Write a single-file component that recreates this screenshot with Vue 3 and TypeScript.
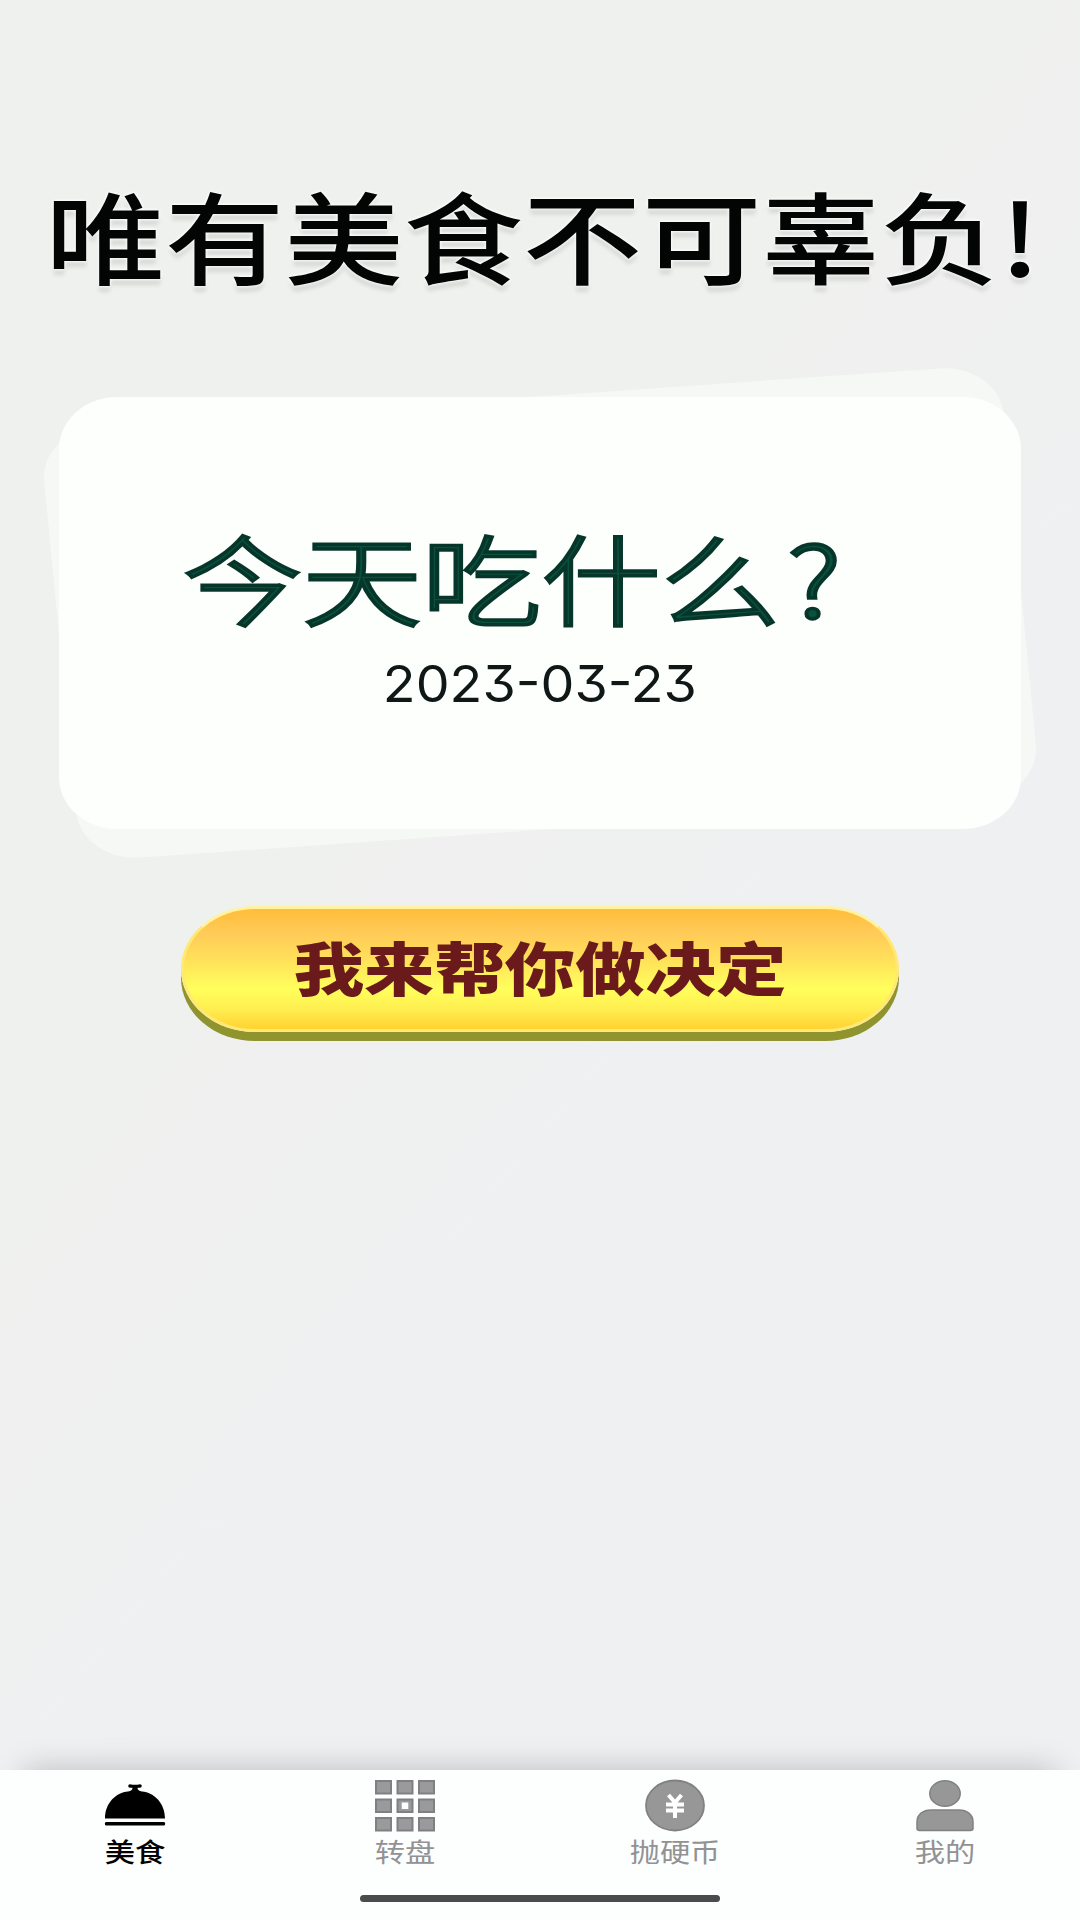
<script setup lang="ts">
type TabIcon = 'food' | 'wheel' | 'coin' | 'mine'

interface Tab {
  icon: TabIcon
  label: string
}

const title = '唯有美食不可辜负!'
const question = '今天吃什么'
const date = '2023-03-23'
const active: TabIcon = 'food'

const tabs: Tab[] = [
  { icon: 'food', label: '美食' },
  { icon: 'wheel', label: '转盘' },
  { icon: 'coin', label: '抛硬币' },
  { icon: 'mine', label: '我的' },
]

const cells = [0, 1, 2, 3, 4, 5, 6, 7, 8]
</script>

<template>
  <div class="screen">
    <h1 class="title"><span class="wide">{{ title }}</span></h1>

    <section class="card">
      <div class="question"><span class="wide">{{ question }}<span class="mark">?</span></span></div>
      <div class="date"><span class="wide">{{ date }}</span></div>
    </section>

    <button class="decide"><span class="wide">我来帮你做决定</span></button>

    <nav class="tabbar">
      <div class="tabs">
        <div v-for="tab in tabs" :key="tab.icon" class="tab" :class="{ active: tab.icon === active }">
          <svg class="icon" width="62" height="54" viewBox="0 0 62 54">
            <template v-if="tab.icon === 'food'">
              <path d="M1 39.500C1 24 12 13.500 24 12.500Q28.500 12 28.500 8.800H26A1.800 1.800 0 0 1 26 5.200Q31 6.500 36 5.200A1.800 1.800 0 0 1 36 8.800H33.500Q33.500 12 38 12.500C50 13.500 61 24 61 39.500Z" fill="currentColor" />
              <rect x="1" y="43" width="60" height="3.500" rx="1.200" fill="currentColor" />
            </template>
            <template v-else-if="tab.icon === 'wheel'">
              <template v-for="c in cells" :key="c">
                <rect
                  :x="2 + (c % 3) * 21.500"
                  :y="2 + Math.floor(c / 3) * 18.500"
                  width="15"
                  height="12.500"
                  fill="#9a9a9c"
                  stroke="#808082"
                  stroke-width="2"
                />
              </template>
              <rect x="27.700" y="23.500" width="6.600" height="6.500" fill="#fff" />
            </template>
            <template v-else-if="tab.icon === 'coin'">
              <ellipse cx="31" cy="26.500" rx="29" ry="25" fill="#979798" stroke="#818183" stroke-width="1.800" />
              <path d="M24.500 16L31 23.500L37.500 16M31 23V39M22 25.500H40M22 31.500H40" fill="none" stroke="#fff" stroke-width="4" />
            </template>
            <template v-else>
              <ellipse cx="31" cy="14.500" rx="15.200" ry="12.800" fill="#979798" stroke="#818183" stroke-width="1.500" />
              <path d="M3 49.500V43C3 35.500 9 31 17 31H45C53 31 59 35.500 59 43V49.500Q59 51.500 56.500 51.500H5.500Q3 51.500 3 49.500Z" fill="#979798" stroke="#818183" stroke-width="1.500" />
            </template>
          </svg>
          <div class="label"><span class="wide">{{ tab.label }}</span></div>
        </div>
      </div>
      <div class="home-indicator"></div>
    </nav>
  </div>
</template>

<style>
body {
  margin: 0;
}
</style>

<style scoped>
.screen {
  box-sizing: border-box;
  width: 1080px;
  height: 1920px;
  display: flex;
  flex-direction: column;
  align-items: center;
  overflow: hidden;
  background: linear-gradient(130deg, #eff1ee 0%, #eff1ee 36%, #eff0f2 60%, #eff0f2 100%);
  font-family: "Noto Sans CJK SC", sans-serif;
}

.wide {
  display: inline-block;
  white-space: nowrap;
  transform: scaleX(1.163);
}

.title {
  margin: 159px 0 0;
  padding-left: 6px;
  height: 150px;
  line-height: 150px;
  font-size: 100px;
  font-weight: 500;
  color: #020504;
  text-shadow: 0 0 3px #fff, 0 0 4px #fff, 0 6px 4px rgba(0, 0, 0, 0.1);
}

.title .wide {
  transform: scaleX(1.192);
}

.card {
  position: relative;
  z-index: 0;
  box-sizing: border-box;
  width: 962px;
  height: 432px;
  margin-top: 88px;
  padding-top: 103px;
  text-align: center;
}

.card::before {
  content: "";
  position: absolute;
  z-index: -1;
  inset: 0 73px;
  border-radius: 50px;
  background: #f6f8f6;
  transform: scaleX(1.18) rotate(-4.7deg);
}

.card::after {
  content: "";
  position: absolute;
  z-index: -1;
  inset: 0;
  border-radius: 58px / 52px;
  background: #fdfffd;
}

.question {
  height: 150px;
  padding-right: 55px;
  line-height: 150px;
  font-size: 98px;
  font-weight: 300;
  color: #0b4f3d;
  -webkit-text-stroke: 3.400px #06352a;
}

.question .wide {
  transform: scaleX(1.219);
}

.mark {
  margin-left: 6px;
}

.date {
  height: 66px;
  line-height: 68px;
  font-family: Inter, sans-serif;
  font-feature-settings: "cv09";
  font-size: 51px;
  color: #101817;
}

.date .wide {
  transform: scaleX(1.055);
}

.decide {
  width: 718px;
  height: 126px;
  margin: 77px 0 0;
  padding: 0;
  border: 3px solid #ffe873;
  border-top-color: #fff3a0;
  border-radius: 74px / 63px;
  background: linear-gradient(180deg, #ffbc38 0%, #ffcb58 22%, #ffe05a 42%, #ffff5c 66%, #ffee50 82%, #ffce2c 100%);
  background-origin: border-box;
  box-shadow: 0 9px 0 #8f942f;
  font-family: "Noto Sans CJK SC", sans-serif;
  font-size: 58px;
  font-weight: 900;
  line-height: 106px;
  color: #6b1a1b;
}

.decide .wide {
  position: relative;
  top: -3px;
  transform: scaleX(1.213);
}

.tabbar {
  width: 1080px;
  height: 150px;
  margin-top: auto;
  display: flex;
  flex-direction: column;
  align-items: center;
  background: #fdfefe;
  box-shadow: 0 -24px 30px -24px rgba(0, 0, 0, 0.22);
}

.tabs {
  width: 100%;
  display: flex;
}

.tab {
  flex: 1;
  display: flex;
  flex-direction: column;
  align-items: center;
  padding-top: 9px;
  color: #929294;
}

.icon {
  display: block;
}

.label {
  height: 40px;
  margin-top: -2px;
  line-height: 40px;
  font-size: 26px;
}

.active {
  color: #000;
}

.active .label {
  font-weight: 500;
}

.home-indicator {
  width: 360px;
  height: 7px;
  margin-top: 24px;
  border-radius: 4px;
  background: #4b4b4d;
}
</style>
